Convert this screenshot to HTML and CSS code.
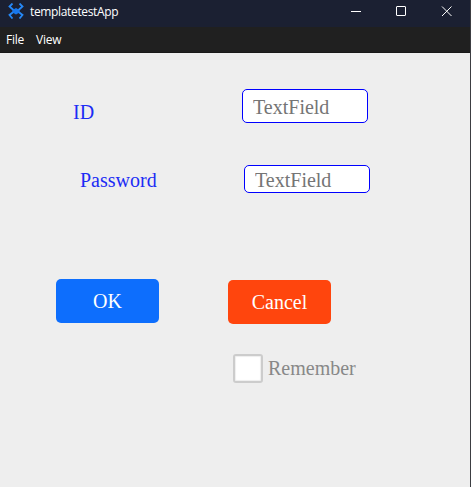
FILE: index.html
```html
<!DOCTYPE html>
<html lang="en">
<head>
<meta charset="utf-8">
<title>templatetestApp</title>
<link rel="stylesheet" href="styles.css">
</head>
<body>
<div class="window">
  <header class="titlebar">
    <svg class="logo" width="16" height="16" viewBox="0 0 16 16" fill="none" stroke="#2688f7" stroke-width="1.800">
      <path d="M4.500 .5 1.500 3.500 6 7.500M11.500 .5l3 3L10 7.500M6 8.500l-4.500 3.500 3 3.500M10 8.500l4.500 3.500-3 3.500"/>
      <path d="M4.500 7 8 5l3.500 2v2.500L8 11.500 4.500 9.500z" fill="#1877ed" stroke="none"/>
    </svg>
    <span class="title">templatetestApp</span>
    <div class="controls">
      <svg width="46" height="27" viewBox="0 0 46 27"><path d="M19 11.500h10"/></svg>
      <svg width="46" height="27" viewBox="0 0 46 27"><rect x="18.500" y="6.500" width="9" height="9" rx=".5"/></svg>
      <svg width="46" height="27" viewBox="0 0 46 27"><path d="m18 6.500 9.500 9.500M27.500 6.500 18 16"/></svg>
    </div>
  </header>
  <nav class="menubar"><span>File</span><span>View</span></nav>
  <main class="form">
    <div class="row row-id">
      <label for="id">ID</label>
      <input id="id" class="field" placeholder="TextField">
    </div>
    <div class="row row-password">
      <label for="password">Password</label>
      <input id="password" class="field field-short" placeholder="TextField">
    </div>
    <div class="actions">
      <button class="btn ok">OK</button>
      <button class="btn cancel">Cancel</button>
    </div>
    <label class="remember"><input class="check" type="checkbox"><span>Remember</span></label>
  </main>
</div>
</body>
</html>
```
FILE: styles.css
```css
* { box-sizing: border-box; }
body {
  margin: 0;
  height: 487px;
  overflow: hidden;
  background: #3c3e42;
}
.window {
  display: flex;
  flex-direction: column;
  width: 470px;
  height: 487px;
  background: #eee;
}
.titlebar {
  display: flex;
  flex: 0 0 27px;
  background: #1b2032;
  color: #fff;
  font: 12px/24px "Open Sans", sans-serif;
}
.logo { margin: 3px 6px 0 8px; }
.title { letter-spacing: -.35px; }
.controls {
  display: flex;
  margin-left: auto;
}
.controls svg {
  fill: none;
  stroke: #fff;
  stroke-width: 1;
}
.menubar {
  display: flex;
  flex: 0 0 26px;
  gap: 12px;
  padding-left: 6px;
  background: #202020;
  border-bottom: 1px solid #191919;
  color: #fff;
  font: 12px/25px "Open Sans", sans-serif;
  letter-spacing: -.25px;
}
.form {
  flex: 1;
  padding-top: 36px;
  font: 20px/24px "Liberation Serif", serif;
  color: #1c2cf5;
}
.row {
  display: flex;
  align-items: center;
}
.row-id { padding-left: 73px; height: 34px; }
.row-id label { width: 169px; padding-top: 11px; }
.row-password {
  height: 28px;
  margin-top: 42px;
  padding-left: 80px;
}
.row-password label { width: 164px; padding-top: 1px; }
.field {
  width: 126px;
  height: 34px;
  padding: 2px 10px 0;
  border: 1px solid #00f;
  border-radius: 5px;
  background: #fff;
  font: inherit;
}
.field-short { height: 28px; }
.field::placeholder { color: #757575; }
.actions {
  display: flex;
  gap: 69px;
  margin: 86px 0 0 56px;
}
.btn {
  width: 103px;
  height: 44px;
  padding: 0;
  border: 0;
  border-radius: 5px;
  color: #fff;
  font: inherit;
}
.ok { background: #0d6efd; }
.cancel { margin-top: 1px; background: #ff450d; }
.remember {
  display: flex;
  align-items: center;
  gap: 5px;
  width: max-content;
  margin: 30px 0 0 233px;
  color: #888;
}
.remember span { padding-bottom: 1px; }
.check {
  appearance: none;
  width: 30px;
  height: 29px;
  margin: 0;
  border: 2px solid #ccc;
  border-radius: 3px;
  background: #fff;
  box-shadow: inset 0 0 1px 1px #eee;
}
```
